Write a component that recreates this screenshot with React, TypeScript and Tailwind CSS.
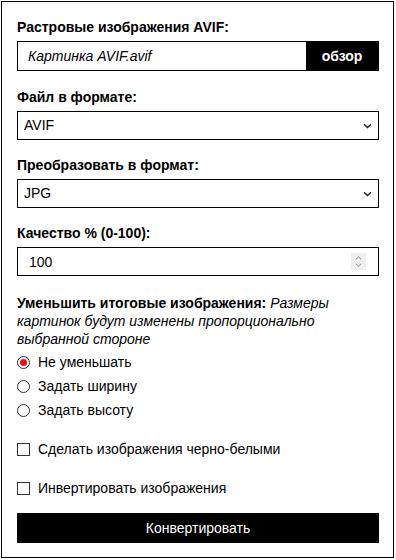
import React, { useState } from 'react';

const font = { fontFamily: '"Liberation Sans", Arial, sans-serif' };

const Chevron: React.FC = () => (
    <svg width="9" height="6" viewBox="0 0 9 6" className="pointer-events-none absolute right-[7px] top-1/2 -translate-y-1/2">
        <path d="M1 1.2 L4.5 4.6 L8 1.2" fill="none" stroke="#222" strokeWidth="1.4" />
    </svg>
);

const Label: React.FC<{ children: React.ReactNode }> = ({ children }) => (
    <div className="text-[14px] leading-[18px] font-bold text-black mb-[5px]">{children}</div>
);

const App: React.FC = () => {
    const [from, setFrom] = useState('AVIF');
    const [to, setTo] = useState('JPG');
    const [quality, setQuality] = useState('100');
    const [resize, setResize] = useState('none');
    const [gray, setGray] = useState(false);
    const [invert, setInvert] = useState(false);

    const radios = [
        { id: 'none', label: 'Не уменьшать' },
        { id: 'width', label: 'Задать ширину' },
        { id: 'height', label: 'Задать высоту' },
    ];

    return (
        <div className="p-px bg-white" style={font}>
            <div className="w-[393px] h-[557px] border border-black bg-white pl-[15px] pr-[13px] pt-[16px] text-black">
                <Label>Растровые изображения AVIF:</Label>
                <div className="flex h-[30px] w-[362px] border border-black">
                    <div className="flex-1 flex items-center pl-[10px] text-[14px] italic">Картинка AVIF.avif</div>
                    <button className="w-[72px] bg-black text-white font-bold text-[14px]">обзор</button>
                </div>

                <div className="mt-[17px]">
                    <Label>Файл в формате:</Label>
                    <div className="relative w-[362px]">
                        <select
                            value={from}
                            onChange={(e) => setFrom(e.target.value)}
                            className="appearance-none w-full h-[29px] border border-black bg-white pl-[6px] text-[14px] outline-none"
                        >
                            <option>AVIF</option>
                            <option>PNG</option>
                        </select>
                        <Chevron />
                    </div>
                </div>

                <div className="mt-[16px]">
                    <Label>Преобразовать в формат:</Label>
                    <div className="relative w-[362px]">
                        <select
                            value={to}
                            onChange={(e) => setTo(e.target.value)}
                            className="appearance-none w-full h-[29px] border border-black bg-white pl-[6px] text-[14px] outline-none"
                        >
                            <option>JPG</option>
                            <option>PNG</option>
                            <option>WEBP</option>
                        </select>
                        <Chevron />
                    </div>
                </div>

                <div className="mt-[16px]">
                    <Label>Качество % (0-100):</Label>
                    <div className="flex items-center w-[362px] h-[29px] border border-black">
                        <input
                            type="text"
                            value={quality}
                            onChange={(e) => setQuality(e.target.value)}
                            className="flex-1 min-w-0 h-full pl-[11px] text-[14px] outline-none bg-transparent"
                        />
                        <div className="w-[15px] h-[17px] mr-[12px] bg-[#efefef] flex flex-col items-center justify-center gap-[3px]">
                            <svg width="7" height="4" viewBox="0 0 7 4"><path d="M0.8 3.4 L3.5 0.8 L6.2 3.4" fill="none" stroke="#8a8a8a" strokeWidth="1" /></svg>
                            <svg width="7" height="4" viewBox="0 0 7 4"><path d="M0.8 0.6 L3.5 3.2 L6.2 0.6" fill="none" stroke="#8a8a8a" strokeWidth="1" /></svg>
                        </div>
                    </div>
                </div>

                <p className="mt-[18px] text-[14px] leading-[18px] w-[340px]">
                    <span className="font-bold">Уменьшить итоговые изображения: </span>
                    <i>Размеры картинок будут изменены пропорционально выбранной стороне</i>
                </p>

                <div className="mt-[2px] flex flex-col">
                    {radios.map((r) => (
                        <label key={r.id} className="flex items-center h-[24px] text-[14px] cursor-pointer" onClick={() => setResize(r.id)}>
                            <span className="w-[13px] h-[13px] rounded-full border border-[#333] flex items-center justify-center mr-[8px] bg-white">
                                {resize === r.id && <span className="w-[7px] h-[7px] rounded-full bg-[#e8101e]" />}
                            </span>
                            {r.label}
                        </label>
                    ))}
                </div>

                <label className="mt-[15px] flex items-center h-[24px] text-[14px] cursor-pointer" onClick={() => setGray(!gray)}>
                    <span className="w-[13px] h-[13px] border border-[#333] mr-[8px] bg-white flex items-center justify-center text-[10px] leading-none">
                        {gray ? '✓' : ''}
                    </span>
                    Сделать изображения черно-белыми
                </label>

                <label className="mt-[15px] flex items-center h-[24px] text-[14px] cursor-pointer" onClick={() => setInvert(!invert)}>
                    <span className="w-[13px] h-[13px] border border-[#333] mr-[8px] bg-white flex items-center justify-center text-[10px] leading-none">
                        {invert ? '✓' : ''}
                    </span>
                    Инвертировать изображения
                </label>

                <button className="mt-[13px] w-[362px] h-[30px] bg-black text-white text-[14px]">Конвертировать</button>
            </div>
        </div>
    );
};

export default App;
